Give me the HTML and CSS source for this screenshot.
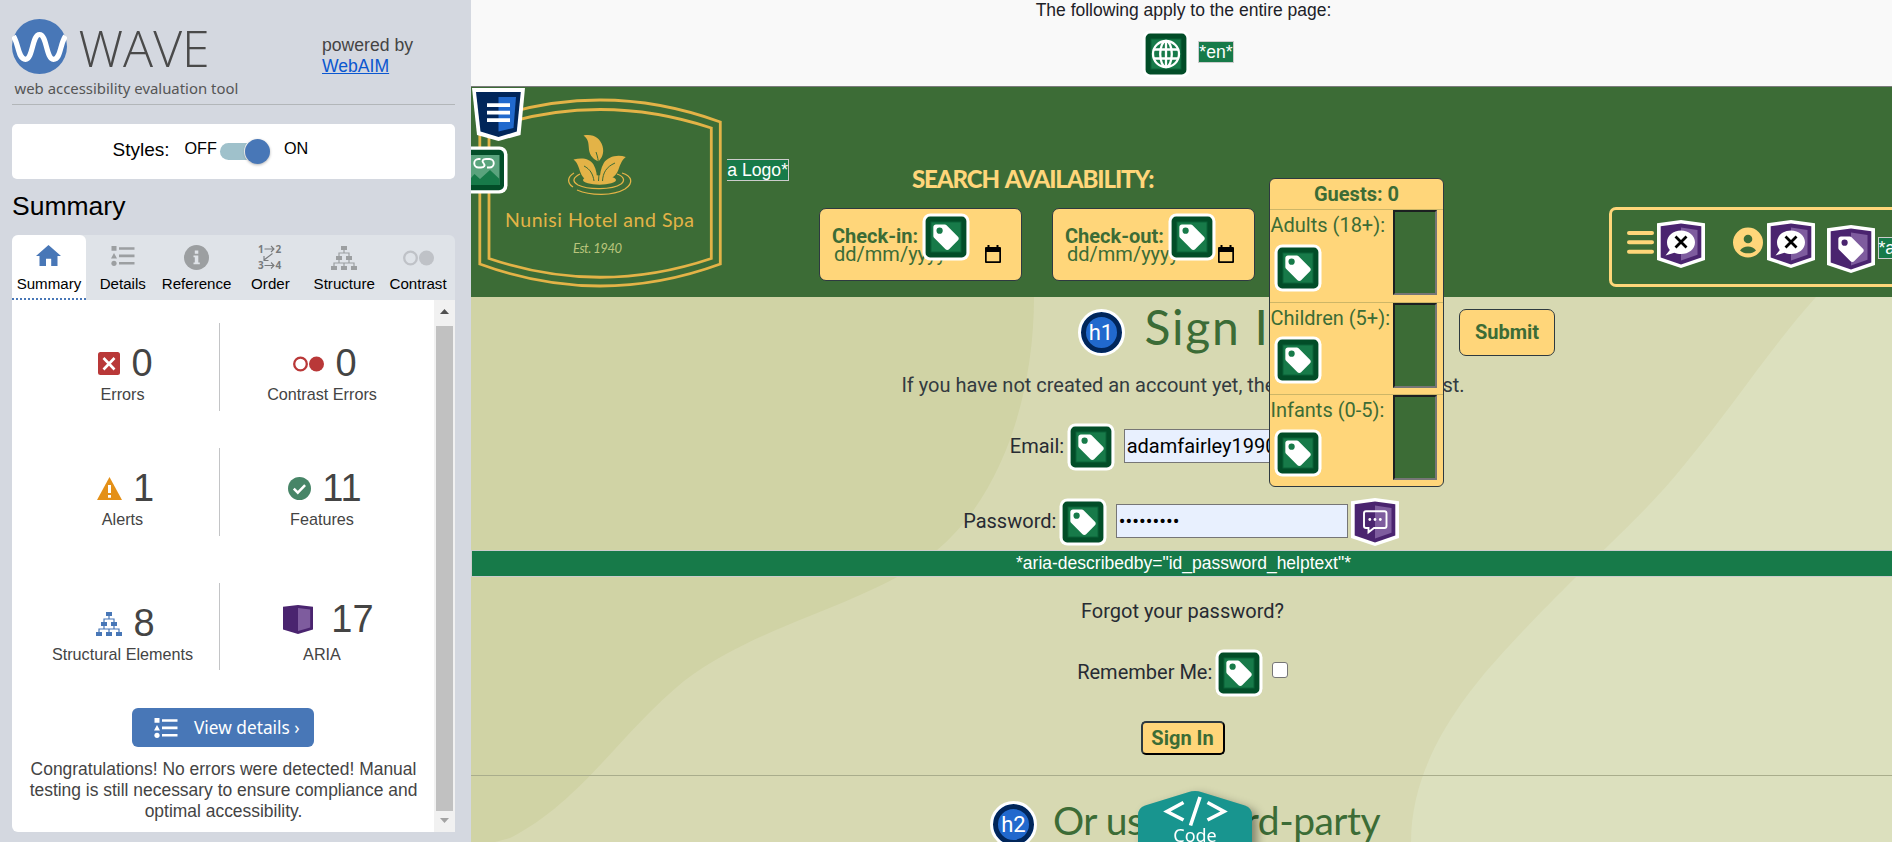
FILE: index.html
```html
<!DOCTYPE html>
<html lang="en">
<head>
<meta charset="utf-8">
<title>WAVE report</title>
<link rel="stylesheet" href="styles.css">
</head>
<body>
<svg class="defs" aria-hidden="true">
  <symbol id="green" viewBox="0 0 48 48">
    <rect x=".5" y=".5" width="47" height="47" rx="8" fill="#fff"/>
    <rect x="3.6" y="3.6" width="40.8" height="40.8" rx="4.5" fill="#024d28"/>
    <rect x="9" y="9" width="30" height="30" fill="#177a49" stroke="#0b6338"/>
  </symbol>
  <symbol id="tagshape" viewBox="0 0 48 48">
    <path transform="translate(8.8 9) scale(1.27)" fill="#fff" d="M21.41 11.58l-9-9C12.05 2.22 11.55 2 11 2H4c-1.1 0-2 .9-2 2v7c0 .55.22 1.05.59 1.42l9 9c.36.36.86.58 1.41.58s1.05-.22 1.41-.59l7-7c.37-.36.59-.86.59-1.41s-.23-1.06-.59-1.42z"/>
  </symbol>
  <symbol id="tag" viewBox="0 0 48 48">
    <use href="#green"/><use href="#tagshape"/><circle cx="17.6" cy="17.7" r="3.1" fill="#177a49"/>
  </symbol>
  <symbol id="globe" viewBox="0 0 48 48">
    <use href="#green"/>
    <g fill="none" stroke="#fff" stroke-width="2.3"><circle cx="24" cy="24" r="13"/><ellipse cx="24" cy="24" rx="5.8" ry="13"/><path d="M24 11v26M12 19.5h24M12 28.5h24"/></g>
  </symbol>
  <symbol id="shield" viewBox="0 0 48 48">
    <path d="M24 0L48 3.2V40L24 48 0 40V3.2z" fill="#fff"/>
    <path d="M24 3.6L44.3 6.2V37.6L24 44.4 3.7 37.6V6.2z" fill="#4a246f"/>
    <path d="M24 7.5L40.5 10V34.8L24 40.5z" fill="#7e5c9e"/>
  </symbol>
  <symbol id="ariax" viewBox="0 0 48 48">
    <use href="#shield"/>
    <path d="M24 10.5c7.9 0 14 5.2 14 11.8s-6.1 11.8-14 11.8c-2.4 0-4.7-.5-6.7-1.3L8.5 35.5l4.3-5.4C11 28 10 25.300 10 22.300c0-6.600 6.100-11.800 14-11.800z" fill="#fff"/>
    <path d="M18.5 16.500l11 11M29.500 16.500l-11 11" stroke="#000" stroke-width="2.8"/>
  </symbol>
  <symbol id="ariatag" viewBox="0 0 48 48">
    <use href="#shield"/><use href="#tagshape"/><circle cx="17.6" cy="17.7" r="3.1" fill="#4a246f"/>
  </symbol>
  <symbol id="ariachat" viewBox="0 0 48 48">
    <use href="#shield"/>
    <path d="M15 13.300h18.500a2 2 0 0 1 2 2V28a2 2 0 0 1-2 2H23l-5.500 4.300V30H15a2 2 0 0 1-2-2V15.300a2 2 0 0 1 2-2z" fill="none" stroke="#fff" stroke-width="1.900"/>
    <circle cx="18.800" cy="21.500" r="1.400" fill="#fff"/><circle cx="24" cy="21.500" r="1.400" fill="#fff"/><circle cx="29.300" cy="21.500" r="1.400" fill="#fff"/>
  </symbol>
  <symbol id="header-struct" viewBox="0 0 53 53">
    <path d="M0 0H53L48.500 47 26.500 53 5 47z" fill="#fff"/>
    <path d="M4 4H48.800L44.800 43.500 26.500 49 8.500 43.500z" fill="#01265a"/>
    <path d="M26.500 9H44L41.500 40 26.500 43.500z" fill="#2169cd"/>
    <path d="M15 17.200h23M15 24.700h23M15 32.200h23" stroke="#fff" stroke-width="3.800"/>
  </symbol>
  <symbol id="list" viewBox="0 0 24 20">
    <path d="M.500 0h5v4.800h-5zM3 7l3 5.500H0zM8 1.200h15.500v2.600H8zM8 8.600h15.500v2.600H8zM8 16h15.500v2.600H8z"/><circle cx="3" cy="17.300" r="2.600"/>
  </symbol>
  <symbol id="tree" viewBox="0 0 26 24">
    <path d="M10 0h6v4h-6zM5 10h6v4H5zM15 10h6v4h-6zM0 20h6v4H0zM10 20h6v4h-6zM20 20h6v4h-6z"/>
    <path d="M13 4v3M8 10V7h10v3M8 14v3M18 14v3M3 20v-3h20v3M13 20v-3" fill="none" stroke="currentColor" stroke-width="1.200"/>
  </symbol>
  <symbol id="rings" viewBox="0 0 31 16">
    <circle cx="7.500" cy="8" r="6.300" fill="none" stroke="currentColor" stroke-width="2.300"/><circle cx="23.500" cy="8" r="7.500"/>
  </symbol>
  <symbol id="calendar" viewBox="0 0 16 18">
    <path d="M2.500 0h2v2h7V0h2v2H15a1 1 0 0 1 1 1v14a1 1 0 0 1-1 1H1a1 1 0 0 1-1-1V3a1 1 0 0 1 1-1h1.500zM1.700 7v9.300h12.600V7z"/>
  </symbol>
</svg>

<div class="app">
  <aside class="side">
    <div class="brand">
      <div class="brand-main">
        <div class="brand-row">
          <svg class="mark" viewBox="0 0 55 55"><circle cx="27.500" cy="27.500" r="27.500" fill="#4877b7"/><path d="M1.500 17C7 26 6 40 13.500 40.300 21 40.500 20 15.500 27.500 15.500S34 40.500 41.500 40.300C49 40 47.500 26 53.500 17" fill="none" stroke="#fff" stroke-width="5.200"/></svg>
          <span class="wave">WAVE</span>
        </div>
        <div class="tagline">web accessibility evaluation tool</div>
      </div>
      <div class="powered">powered by<br><a>WebAIM</a></div>
    </div>
    <div class="styles-box">
      <span class="styles-label">Styles:</span><span class="off">OFF</span>
      <span class="toggle"><span class="thumb"></span></span><span class="on">ON</span>
    </div>
    <h2 class="title">Summary</h2>
    <div class="tabs">
      <div class="tab active"><svg class="i-home" viewBox="0 0 25 21"><path d="M12.500 0L25 11h-3.500v10h-6.300v-7.300H10V21H3.500V11H0z" fill="#4877b7"/></svg>Summary</div>
      <div class="tab"><svg class="i-list"><use href="#list"/></svg>Details</div>
      <div class="tab"><svg class="i-info" viewBox="0 0 25 25"><circle cx="12.500" cy="12.500" r="12.500"/><path d="M10.800 5.500h3.500v3.200h-3.500zM9.500 10.400h4.800v7h1.500v1.900H9.500v-1.900h1.300v-5.100H9.500z" fill="#dfe3e8"/></svg>Reference</div>
      <div class="tab"><svg class="i-order" viewBox="0 0 24 25"><g class="digits"><text x="0" y="7.700">1</text><text x="17.500" y="7.700">2</text><text x="0" y="24.200">3</text><text x="17.500" y="24.200">4</text></g><path d="M6.500 4h9M13 1l3 3-3 3M6.500 20.500h9M13 17.500l3 3-3 3M14.500 8.500L6 15M6 11v4.500h4.500" fill="none" stroke="#777a7c" stroke-width="1.100"/></svg>Order</div>
      <div class="tab"><svg class="i-tree"><use href="#tree"/></svg>Structure</div>
      <div class="tab faded"><svg class="i-rings"><use href="#rings"/></svg>Contrast</div>
    </div>
    <div class="panel">
      <div class="report">
        <div class="stats">
          <div class="stat"><div class="count"><svg class="i-err" viewBox="0 0 22 23"><rect width="22" height="23" rx="2.500" fill="#b93838"/><path d="M5.500 6l11 11.500M16.500 6l-11 11.500" stroke="#fff" stroke-width="2.600"/></svg>0</div>Errors</div>
          <div class="stat"><div class="count red"><svg class="i-rings"><use href="#rings"/></svg><span>0</span></div>Contrast Errors</div>
          <div class="stat"><div class="count"><svg class="i-alert" viewBox="0 0 25 23"><path d="M12.500 0L25 23H0z" fill="#e49018"/><path d="M11 8h3v8h-3zM11 18h3v2.700h-3z" fill="#fff"/></svg>1</div>Alerts</div>
          <div class="stat"><div class="count"><svg class="i-feat" viewBox="0 0 23 23"><circle cx="11.500" cy="11.500" r="11.500" fill="#478567"/><path d="M5.800 11.700l4 4 7.300-7.500" fill="none" stroke="#fff" stroke-width="2.500"/></svg>11</div>Features</div>
          <div class="stat"><div class="count"><svg class="i-tree blue"><use href="#tree"/></svg>8</div>Structural Elements</div>
          <div class="stat"><div class="count aria"><svg class="i-aria" viewBox="0 0 30 29"><path d="M15 0L30 1.800V24.600L15 29 0 24.600V1.800z" fill="#4a246f"/><path d="M15 3L27.200 4.500V22.500L15 26z" fill="#7e5c9e"/></svg>17</div>ARIA</div>
        </div>
        <div class="view"><svg class="i-list"><use href="#list"/></svg>View details ›</div>
        <p class="congrats">Congratulations! No errors were detected! Manual<br>testing is still necessary to ensure compliance and<br>optimal accessibility.</p>
      </div>
      <div class="scroll"><svg class="arrow" viewBox="0 0 9 5"><path d="M4.500 0L9 5H0z" fill="#505050"/></svg><div class="bar"></div><svg class="arrow" viewBox="0 0 9 5"><path d="M0 0h9L4.500 5z" fill="#a3a3a3"/></svg></div>
    </div>
  </aside>

  <main class="page">
    <div class="notice">
      <div class="notice-text">The following apply to the entire page:</div>
      <div class="notice-icons"><svg class="ic"><use href="#globe"/></svg><span class="mark-text">*en*</span></div>
    </div>
    <header class="head">
      <svg class="logo" viewBox="471 87 256 211">
        <g fill="none" stroke="#e3b347" stroke-width="2.800">
          <path d="M479.800 122Q600 78 720.300 122V264Q600 308 479.800 264z"/>
          <path d="M489 128Q600 91 711.300 128V258.500Q600 296 489 258.500z"/>
        </g>
        <g fill="#e3b347">
          <path d="M583.500 135.500c10-2 16.500 2.500 19 10.500 2 7-.5 12-4 15.500-7-3-9.500-8-9.700-14-.2-5-1-9-5.300-12z"/>
          <path d="M573.500 159.500c9-2 16-1 20 5 3 5 3.500 11 3.500 16-8 2-14-1-16.500-8-1.800-5-3-10-7-13z"/>
          <path d="M625.800 157c-9-3-18 0-22 6-3 5-4 11-4 17 9 1 16-3 18.500-10 1.800-5 3.500-10 7.500-13z"/>
          <ellipse cx="599.500" cy="180" rx="16.500" ry="4.700"/>
        </g>
        <path d="M596 152c3 8 3.500 18 2.500 29M584 166c6 3 9 8 10 15M615 163c-9 4-12 10-12.500 18" stroke="#3c6c36" fill="none"/>
        <path d="M580 174c-6 3-9 7-2 11 10 5 34 5 43-1 5-4 2-8-4-10M574 173c-7 4-7 10-1 14M577 190c14 6 36 6 48-1 9-6 7-13-3-16" fill="none" stroke="#e3b347" stroke-width="1.300"/>
        <text class="logo-name" x="505" y="226.700" textLength="189" lengthAdjust="spacing">Nunisi Hotel and Spa</text>
        <text class="logo-est" x="573" y="253" textLength="49">Est. 1940</text>
      </svg>
      <span class="mark-text logo-alt">a Logo*</span>
      <svg class="pin struct"><use href="#header-struct"/></svg>
      <svg class="pin linkimg" viewBox="0 0 37 48"><path d="M0 .500H28.500a8 8 0 0 1 8 8V39.500a8 8 0 0 1-8 8H0z" fill="#fff"/><path d="M0 3.700h28a5 5 0 0 1 5 5v30.600a5 5 0 0 1-5 5H0z" fill="#024d28"/><path d="M0 9h28.500v30H0z" fill="#5aa37d"/><path d="M0 32l3.500-4 5.500 5L19 24l9.500 9v6H0z" fill="#177a49"/><path d="M9.500 13H7.500a4.200 4.200 0 0 0 0 8.500H10c3.200 0 4.500-2 2.500-4.300M16 21.500h2.500a4.200 4.200 0 0 0 0-8.500H15c-3.200 0-4.500 2-2.500 4.200" fill="none" stroke="#fff" stroke-width="1.900"/></svg>

      <section class="search">
        <h3>SEARCH AVAILABILITY:</h3>
        <div class="dates">
          <div class="date"><b>Check-in:</b><span>dd/mm/yyyy</span><svg class="cal"><use href="#calendar"/></svg><svg class="ic in"><use href="#tag"/></svg></div>
          <div class="date"><b>Check-out:</b><span>dd/mm/yyyy</span><svg class="cal"><use href="#calendar"/></svg><svg class="ic out"><use href="#tag"/></svg></div>
        </div>
      </section>
      <nav class="menu">
        <svg class="burger" viewBox="0 0 27 23"><path d="M2 2h23M2 11.300h23M2 20.700h23" stroke="#ffd67a" stroke-width="4" stroke-linecap="round"/></svg>
        <svg class="ic"><use href="#ariax"/></svg>
        <svg class="user" viewBox="0 0 30 31"><circle cx="15" cy="15.500" r="15" fill="#ffd67a"/><circle cx="15" cy="12" r="4.300" fill="#3c6c36"/><path d="M7 23.500c3.500-5.500 12.500-5.500 16 0-4 3.800-12 3.800-16 0z" fill="#3c6c36"/></svg>
        <svg class="ic"><use href="#ariax"/></svg>
        <svg class="ic low"><use href="#ariatag"/></svg>
        <span class="mark-text aria-alt">*aria</span>
      </nav>
    </header>

    <div class="content">
      <svg class="waves" viewBox="0 0 1421 545" preserveAspectRatio="none"><path d="M0 0H563C563 100 530 200 465 254C400 308 290 325 213 384C150 435 110 505 39 541L24 545H0Z" fill="#d0d3a5"/><path d="M1345 0C1300 50 1260 112 1214 167C1180 210 1135 250 1105 280C1080 305 1060 325 1038 349C1000 390 940 460 940 545H1421V0Z" fill="#dce0be"/></svg>
      <div class="row r-h1"><span class="hbadge">h1</span><h1>Sign In</h1></div>
      <div class="row r-intro">If you have not created an account yet, then please sign up first.</div>
      <div class="row r-email"><label>Email:</label><svg class="ic"><use href="#tag"/></svg><div class="field">adamfairley1990</div></div>
      <div class="row r-pass"><label>Password:</label><svg class="ic"><use href="#tag"/></svg><div class="field dots">•••••••••</div><svg class="ic after"><use href="#ariachat"/></svg></div>
      <div class="band">*aria-describedby="id_password_helptext"*</div>
      <div class="row r-forgot">Forgot your password?</div>
      <div class="row r-rem"><label>Remember Me:</label><svg class="ic"><use href="#tag"/></svg><span class="check"></span></div>
      <div class="row r-btn"><span class="signin">Sign In</span></div>
      <div class="row r-h2"><span class="hbadge">h2</span><h2>Or use a third-party</h2></div>
    </div>

    <div class="guests">
      <div class="g-head">Guests: 0</div>
      <div class="g-row"><div>Adults (18+):<svg class="ic"><use href="#tag"/></svg></div><span class="num"></span></div>
      <div class="g-row"><div>Children (5+):<svg class="ic"><use href="#tag"/></svg></div><span class="num"></span></div>
      <div class="g-row"><div>Infants (0-5):<svg class="ic"><use href="#tag"/></svg></div><span class="num"></span></div>
    </div>
    <div class="submit">Submit</div>
    <div class="code">
      <svg class="hex" viewBox="0 0 114 60"><path d="M0 24Q0 17 7 14.500L50 1.200Q57-1 64 1.200L107 14.500Q114 17 114 24V60H0z" fill="#18958f"/><path d="M45.500 11.500L29 20.500 45.500 29M69.500 11.500L86 20.500 69.500 29M62 6L52.500 34.500" fill="none" stroke="#fff" stroke-width="3.600"/></svg>
      <span>Code</span>
    </div>
  </main>
</div>
</body>
</html>
```

FILE: styles.css
```css
* { box-sizing: border-box; }
body { margin: 0; overflow: hidden; font-family: "Liberation Sans", Arial, sans-serif; }
svg { display: block; flex: none; fill: currentColor; }
h1, h2, h3, p { margin: 0; font-weight: 400; }
.defs { position: absolute; width: 0; height: 0; }
.app { display: flex; width: 1892px; height: 842px; overflow: hidden; }

/* Sidebar */
.side { width: 471px; flex: none; background: #d4d8e0; padding: 19px 16px 10px 12px; display: flex; flex-direction: column; }
.brand { display: flex; justify-content: space-between; height: 86px; border-bottom: 1px solid #b2b6b9; color: #444; }
.brand-row { display: flex; gap: 11.5px; height: 55px; align-items: center; }
.mark { width: 55px; height: 55px; }
.wave { font: 300 50px/55px "Open Sans", sans-serif; color: #4a4a4a; letter-spacing: 0; padding-top: 4px; }
.tagline { font: 14.9px/20px "Noto Sans", sans-serif; color: #555; padding: 4px 0 0 2.5px; white-space: nowrap; }
.powered { width: 133px; padding-top: 16px; font-size: 17.6px; line-height: 21px; }
.powered a { color: #0b57d0; text-decoration: underline; }
.styles-box { margin-top: 19px; height: 55px; background: #fff; border-radius: 5px; display: flex; align-items: center; padding-left: 100.5px; color: #000; }
.styles-label { font-size: 19px; width: 72px; padding-bottom: 4px; }
.off, .on { font-size: 16.2px; padding-bottom: 6px; }
.off { width: 35.5px; }
.toggle { width: 48px; height: 17px; border-radius: 9px; background: #9fc1cb; display: flex; justify-content: flex-end; align-items: center; margin-right: 16px; }
.thumb { width: 25px; height: 25px; border-radius: 50%; background: #4877b7; flex: none; margin-right: -2px; box-shadow: 0 1px 3px rgba(0,0,0,.3), 0 0 0 1px #fff; }
.title { font-size: 26.5px; line-height: 30px; margin-top: 12px; color: #000; }
.tabs { margin-top: 14px; height: 65px; display: grid; grid-template-columns: repeat(6, 1fr); background: #dfe3e8; border-radius: 6px 6px 0 0; flex: none; }
.tab { display: grid; grid-template-rows: 45px 8px; font-size: 15.1px; line-height: 8px; justify-items: center; align-items: center; color: #000; }
.tab svg { color: #9c9fa1; }
.tab.faded svg { color: #bfc2c7; }
.tab.active { background: #fff; border-radius: 6px 6px 0 0; border-bottom: 2px dotted #4877b7; }
.i-home { width: 25px; height: 21px; margin-top: -4px; }
.i-list { width: 24px; height: 20px; margin-top: -4px; }
.i-info { width: 25px; height: 25px; }
.i-order { width: 24px; height: 25px; margin-top: -1px; overflow: visible; }
.digits { font: 700 10px "Open Sans", sans-serif; fill: #777a7c; }
.i-tree { width: 26px; height: 24px; }
.i-rings { width: 31px; height: 16px; }
.panel { flex: 1; display: flex; background: #fff; border-radius: 0 0 0 6px; overflow: hidden; }
.report { width: 422px; padding: 23px 12px 0 11px; color: #444; }
.stats { display: grid; grid-template-columns: 197px 200px; grid-template-rows: 88px 88px 87px; row-gap: 37px; }
.stat { text-align: center; font-size: 16.2px; line-height: 18px; padding: 22px 0 0 3px; white-space: nowrap; }
.stat:nth-child(odd) { border-right: 1px solid #c3c4c6; }
.stat:nth-child(even) { padding-left: 4px; }
.stat:nth-child(n+5) { margin: 10px 0 -10px; }
.count { height: 37px; display: flex; justify-content: center; align-items: center; gap: 11px; font-size: 38px; line-height: 37px; padding-left: 6px; margin-bottom: 3px; }
.count svg { margin-top: 0; }
.count.red svg { color: #b93838; }
.count.aria { gap: 18px; padding: 0 0 9px 13px; }
.i-err { width: 22px; height: 23px; }
.i-alert { width: 25px; height: 23px; }
.i-feat { width: 23px; height: 23px; }
.i-aria { width: 30px; height: 29px; }
.blue { color: #4877b7; }
.view { margin: 48px auto 0 109px; width: 182px; height: 39px; border-radius: 6px; background: #4877b7; color: #fff; display: flex; align-items: center; gap: 16px; padding-left: 22px; font: 17.3px/37px "Noto Sans", sans-serif; white-space: nowrap; }
.view .i-list { margin-top: 0; }
.congrats { margin: 12px -10px 0 -8px; text-align: center; font-size: 17.45px; line-height: 21px; white-space: nowrap; }
.scroll { width: 21px; background: #f1f1f1; display: flex; flex-direction: column; align-items: center; justify-content: space-between; padding: 9px 0; }
.arrow { width: 9px; height: 5px; }
.bar { width: 17px; flex: 1; margin: 12px 0 7px; background: #c1c1c1; }

/* Evaluated page */
.page { position: relative; width: 1421px; height: 842px; overflow: hidden; font-family: Roboto, sans-serif; color: #272b33; display: flex; flex-direction: column; }
.ic { width: 48px; height: 48px; }
.notice { height: 87px; flex: none; background: #f9f9f9; border-bottom: 1px solid #7b7b7b; font-family: "Liberation Sans", Arial, sans-serif; text-align: center; }
.notice-text { font-size: 17.5px; line-height: 20px; color: #1d2127; padding-left: 4px; height: 30px; }
.notice-icons { display: flex; justify-content: center; align-items: center; gap: 8px; padding-left: 13px; }
.mark-text { font: 17.6px/20px "Liberation Sans", Arial, sans-serif; color: #fff; background: #177a49; border: 1px solid #ccc; height: 22px; white-space: nowrap; margin-top: -4px; padding: 0; flex: none; }
.head { position: relative; height: 210px; flex: none; background: #3c6c36; display: flex; align-items: flex-start; }
.logo { width: 256px; height: 211px; }
.logo-name { font: 19.5px Lato, sans-serif; fill: #e3b347; }
.logo-est { font: italic 13px Lato, sans-serif; fill: #b9c47c; }
.logo-alt { width: 62px; margin-top: 72px; border-left: 0; padding: 0; text-align: right; }
.pin { position: absolute; }
.struct { left: 1px; top: 1px; width: 53px; height: 53px; }
.linkimg { left: 0; top: 59px; width: 37px; height: 48px; }
.search { width: 436px; flex: none; margin-left: 30px; padding-top: 78px; }
.search h3 { font: 900 24px/28px Lato, sans-serif; letter-spacing: -1.1px; word-spacing: 2px; color: #ffd67a; height: 43px; padding-left: 93px; white-space: nowrap; }
.dates { display: flex; gap: 30px; }
.date { position: relative; width: 203px; height: 73px; background: #ffd67a; border: 1px solid #2e3a40; border-radius: 7px; color: #3c6c36; font-size: 20px; line-height: 18px; padding: 18px 12px 0; display: flex; flex-direction: column; }
.date span { padding-left: 2px; }
.cal { position: absolute; right: 20px; top: 36px; width: 16px; height: 18px; color: #000; }
.date .ic { position: absolute; top: 4px; }
.date .in { left: 101.5px; }
.date .out { left: 114.5px; }
.menu { margin: 120px 0 0 354px; height: 80px; width: 320px; flex: none; border: 3px solid #ffd67a; border-radius: 7px; display: flex; align-items: flex-start; padding: 9.5px 0 0 14.5px; }
.burger { width: 27px; height: 23px; margin: 11px 3px 0 0; }
.user { width: 30px; height: 31px; margin: 7px 3.5px 0 28.5px; }
.low { margin: 5px 3px 0 12px; }
.aria-alt { margin-top: 17px; }

.content { position: relative; flex: 1; background: #d7d9b2; display: flex; flex-direction: column; font-size: 20px; }
.waves { position: absolute; inset: 0; width: 1421px; height: 545px; }
.row { position: relative; display: flex; justify-content: center; align-items: center; flex: none; white-space: nowrap; }
.hbadge { width: 47px; height: 47px; flex: none; border-radius: 50%; border: 3.5px solid #fff; background: #2169cd; box-shadow: inset 0 0 0 5px #01265a; color: #fff; font-size: 22px; line-height: 42px; text-align: center; }
.row h1, .row h2 { font-family: Lato, sans-serif; color: #3c6c36; }
.r-h1 { height: 71px; justify-content: flex-start; padding-left: 606.5px; gap: 20px; }
.row h1 { font-size: 48px; line-height: 60px; padding-bottom: 12px; letter-spacing: 1.7px; }
.r-intro { height: 34px; color: #333b40; padding-left: 3px; }
.r-email { height: 90px; padding: 0 0 2px 3px; }
.r-pass { height: 58px; padding-left: 0; }
.row .ic { margin: 2px .5px 0 3px; }
.field { width: 232px; height: 34px; border: 1px solid #767676; background: #e8f0fe; color: #000; line-height: 32px; margin-left: 8.5px; padding-left: 1.5px; }
.r-forgot { height: 68px; padding-left: 2px; }
.r-rem { height: 56px; padding: 0 0 2px 2px; }
.check { width: 16px; height: 16px; background: #fff; border: 1px solid #767676; border-radius: 3px; margin: -4px 0 0 8px; }
.r-btn { height: 75px; border-bottom: 1px solid #a9ad8c; padding-left: 2px; }
.signin { width: 84px; height: 34px; border: 2px solid #000; border-top-color: #2e3a40; border-left-color: #2e3a40; border-radius: 5px; background: #ffd67a; color: #3c6c36; font-weight: 700; line-height: 30px; text-align: center; }
.r-h2 { height: 97px; justify-content: flex-start; padding-left: 519px; gap: 16px; }
.row h2 { font-size: 39px; line-height: 50px; padding-bottom: 10px; letter-spacing: -.5px; }
.band { position: relative; height: 27px; flex: none; background: #177a49; border: 1px solid #ccc; border-right: 0; color: #fff; font: 17.5px/24px "Liberation Sans", Arial, sans-serif; text-align: center; padding-left: 3px; }

/* Panels above the page */
.guests { position: absolute; left: 798px; top: 178px; width: 175px; height: 309px; border: 1px solid #2e3a40; border-radius: 6px; background: #ffd67a; color: #3c6c36; font-size: 20px; }
.g-head { height: 30px; line-height: 31px; font-weight: 700; text-align: center; }
.g-row { height: 92.5px; border-top: 1px solid #cdb667; display: flex; justify-content: space-between; line-height: 30px; padding: 0 6px 0 .5px; white-space: nowrap; }
.g-row .ic { margin: 3.5px 0 0 3px; }
.num { width: 44px; height: 85px; flex: none; background: #3c6c36; border: 2px solid; border-color: #1c2021 #767676 #767676 #1c2021; }
.submit { position: absolute; left: 988px; top: 309px; width: 96px; height: 47px; border: 1px solid #2e3a40; border-radius: 7px; background: #ffd67a; color: #3c6c36; font-weight: 700; font-size: 20px; line-height: 45px; text-align: center; }
.code { position: absolute; left: 667px; top: 791px; width: 114px; height: 60px; color: #fff; filter: drop-shadow(5px 4px 5px rgba(0,0,0,.4)); }
.code span { position: absolute; left: 0; right: 0; top: 31px; text-align: center; font: 18px/26px "Noto Sans", sans-serif; }
.hex { width: 114px; height: 60px; }
```
